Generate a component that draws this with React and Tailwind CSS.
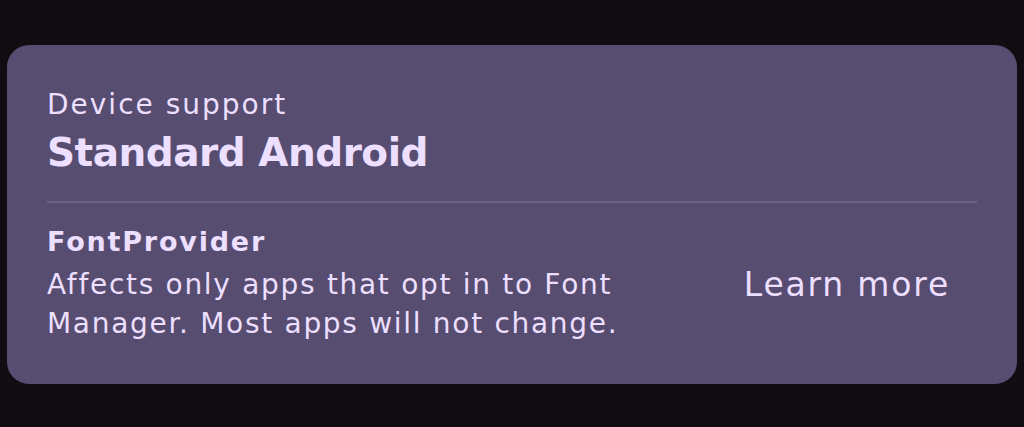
const dv = { fontFamily: '"DejaVu Sans", "Open Sans", sans-serif' };

export default function App() {
  return (
    <div className="w-full h-[427px] bg-[#0f0d12] pt-[45px] px-[7px]">
      <div className="h-[339px] rounded-[22px] bg-[#574d71] px-[40px] pt-[42px] text-[#ecdfff]" style={dv}>
        <div className="text-[28px] leading-[36px] tracking-[2px]">Device support</div>
        <div className="text-[39px] leading-[52px] font-bold tracking-[-0.5px] mt-[4px]">Standard Android</div>
        <div className="h-[2px] bg-[#6c6287] mt-[22px]"></div>
        <div className="text-[27px] leading-[34px] font-bold tracking-[1.8px] mt-[22px]">FontProvider</div>
        <div className="flex items-start mt-[6px]">
          <div className="flex-1 text-[28px] leading-[39px] tracking-[1.7px]">
            Affects only apps that opt in to Font<br />Manager. Most apps will not change.
          </div>
          <div className="pr-[27px] text-[33px] leading-[40px] tracking-[1.8px]">Learn more</div>
        </div>
      </div>
    </div>
  );
}
